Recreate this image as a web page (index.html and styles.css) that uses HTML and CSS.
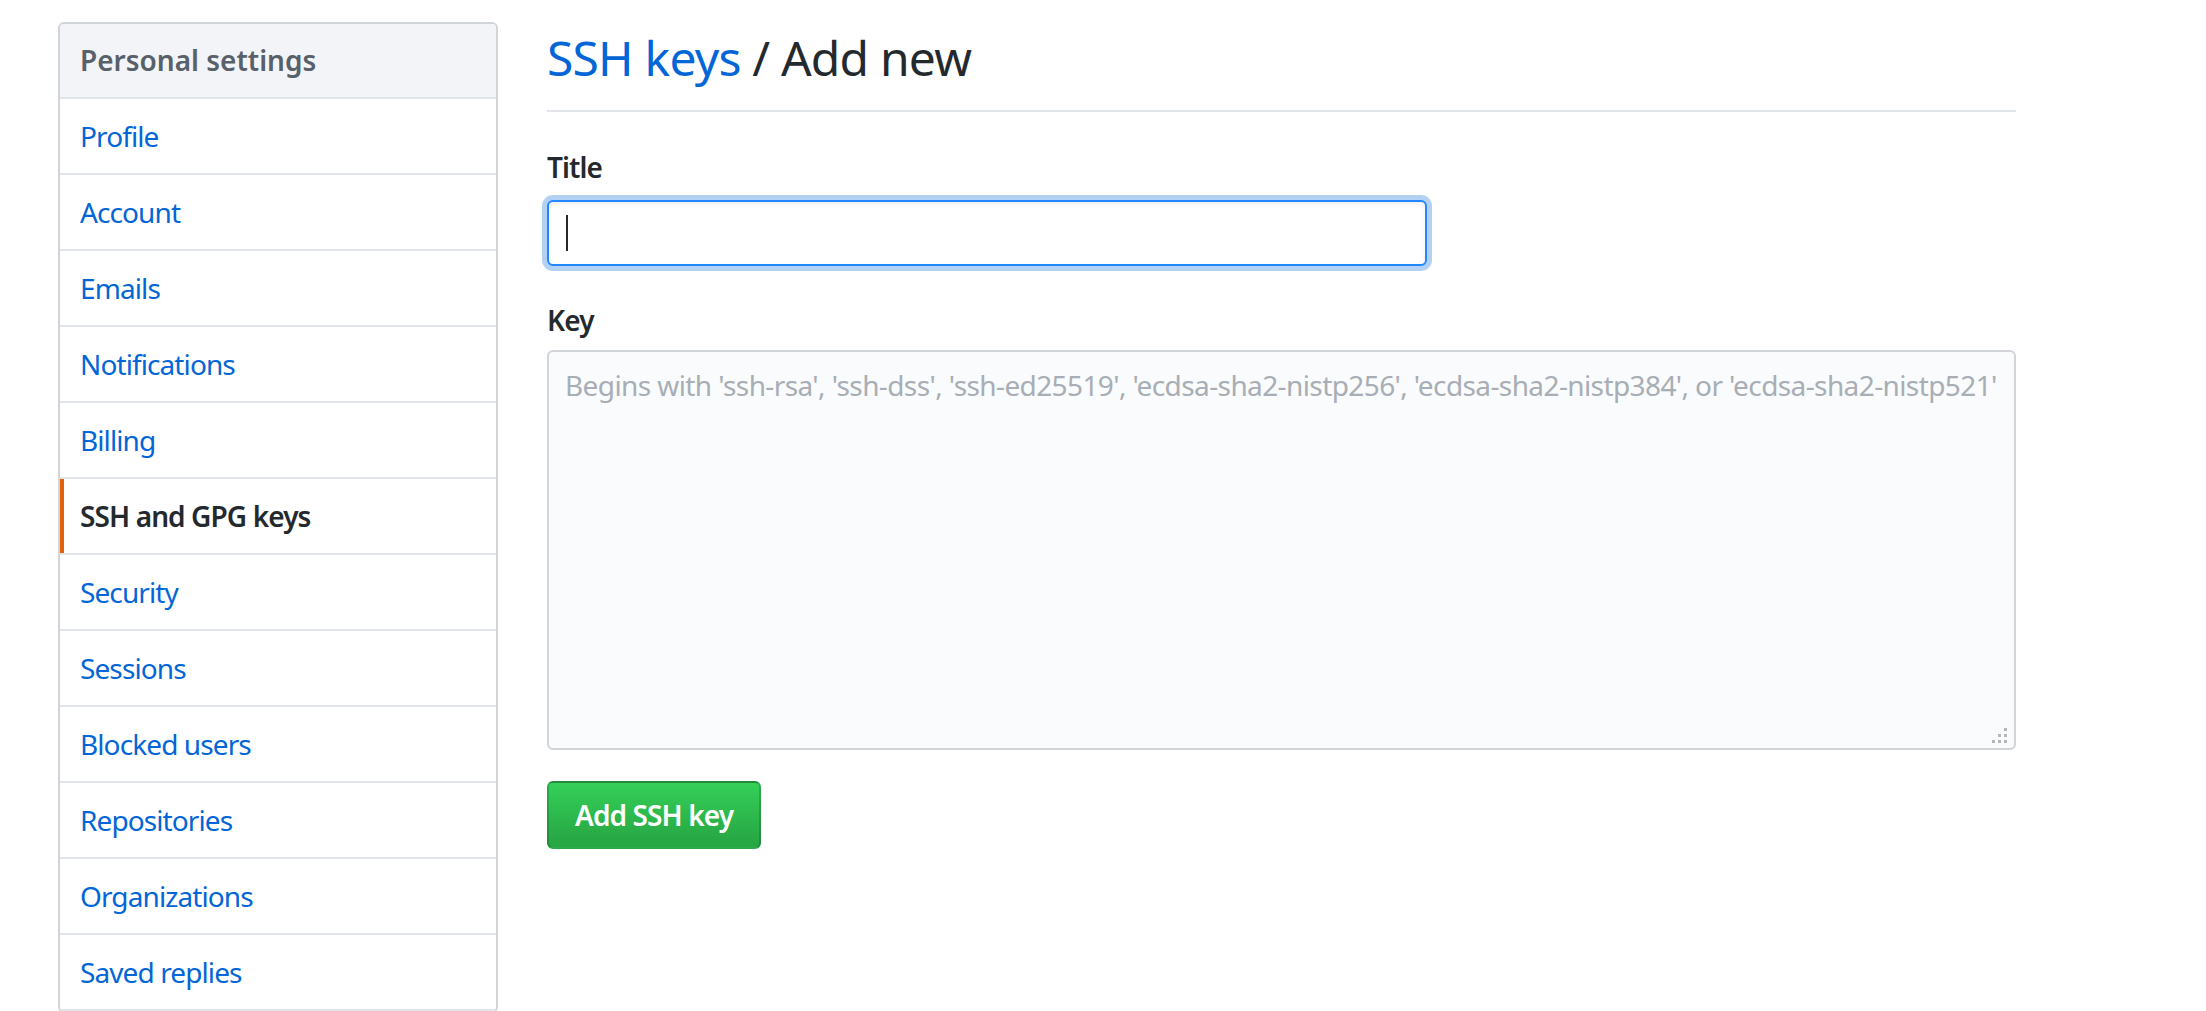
FILE: index.html
```html
<!DOCTYPE html>
<html lang="en">
<head>
<meta charset="utf-8">
<title>SSH keys / Add new</title>
<link rel="stylesheet" href="styles.css">
</head>
<body>
<div class="page">
  <nav class="menu">
    <div class="menu-heading">Personal settings</div>
    <a class="menu-item" href="#">Profile</a>
    <a class="menu-item" href="#">Account</a>
    <a class="menu-item" href="#">Emails</a>
    <a class="menu-item" href="#">Notifications</a>
    <a class="menu-item" href="#">Billing</a>
    <a class="menu-item selected" href="#">SSH and GPG keys</a>
    <a class="menu-item" href="#">Security</a>
    <a class="menu-item" href="#">Sessions</a>
    <a class="menu-item" href="#">Blocked users</a>
    <a class="menu-item" href="#">Repositories</a>
    <a class="menu-item" href="#">Organizations</a>
    <a class="menu-item" href="#">Saved replies</a>
  </nav>
  <main class="main">
    <div class="subhead">
      <h2 class="subhead-heading"><a href="#">SSH keys</a> / Add new</h2>
    </div>
    <form class="key-form">
      <div class="form-group title-group">
        <label class="form-label" for="title">Title</label>
        <div class="input-wrap">
          <input id="title" class="form-control focused" type="text">
          <span class="caret"></span>
        </div>
      </div>
      <div class="form-group key-group">
        <label class="form-label" for="key">Key</label>
        <div class="area-wrap">
          <textarea id="key" class="form-control key-area" placeholder="Begins with 'ssh-rsa', 'ssh-dss', 'ssh-ed25519', 'ecdsa-sha2-nistp256', 'ecdsa-sha2-nistp384', or 'ecdsa-sha2-nistp521'"></textarea>
          <svg class="grip" width="15" height="15" viewBox="0 0 15 15" aria-hidden="true">
            <rect x="12" y="0" width="3" height="3"/>
            <rect x="6" y="6" width="3" height="3"/>
            <rect x="12" y="6" width="3" height="3"/>
            <rect x="0" y="12" width="3" height="3"/>
            <rect x="6" y="12" width="3" height="3"/>
            <rect x="12" y="12" width="3" height="3"/>
          </svg>
        </div>
      </div>
      <button type="button" class="btn-primary">Add SSH key</button>
    </form>
  </main>
</div>
</body>
</html>
```
FILE: styles.css
```css
* {
  box-sizing: border-box;
}

html,
body {
  margin: 0;
  background: #fff;
}

body {
  font-family: "Segoe UI", "Noto Sans", "Open Sans", sans-serif;
  font-size: 28px;
  line-height: 1.5;
  letter-spacing: -0.9px;
  color: #24292e;
}

.page {
  display: flex;
  align-items: flex-start;
  gap: 49px;
  padding: 22px 0 0 58px;
  height: 1011px;
  overflow: hidden;
}

/* ---------- sidebar menu ---------- */
.menu {
  flex: none;
  width: 440px;
  border: 2px solid #d1d5da;
  border-radius: 6px;
  background: #fff;
  overflow: hidden;
}

.menu-heading {
  padding: 16px 20px;
  line-height: 41px;
  font-size: 28px;
  font-weight: 600;
  letter-spacing: 0;
  color: #586069;
  background: #f3f4f8;
  border-bottom: 2px solid #e1e4e8;
}

.menu-item {
  display: block;
  padding: 16px 20px;
  line-height: 42px;
  color: #0366d6;
  text-decoration: none;
  border-bottom: 2px solid #e1e4e8;
}

.menu-item.selected {
  color: #24292e;
  font-weight: 600;
  box-shadow: inset 4px 0 0 #e36209;
}

/* ---------- main column ---------- */
.main {
  flex: none;
  width: 1469px;
}

.subhead {
  padding-bottom: 16px;
  margin-bottom: 34px;
  border-bottom: 2px solid #e1e4e8;
}

.subhead-heading {
  margin: 0;
  font-size: 48px;
  font-weight: 400;
  line-height: 72px;
  letter-spacing: -0.8px;
  color: #24292e;
}

.subhead-heading a {
  color: #0366d6;
  text-decoration: none;
}

.form-label {
  display: block;
  font-weight: 600;
  line-height: 42px;
}

.title-group {
  margin-bottom: 33px;
}

.title-group .form-label {
  margin-bottom: 12px;
}

.key-group {
  margin-bottom: 31px;
}

.key-group .form-label {
  margin-bottom: 9px;
}

.input-wrap {
  position: relative;
  width: 880px;
}

.area-wrap {
  position: relative;
}

.form-control {
  display: block;
  font-family: inherit;
  font-size: 28px;
  letter-spacing: -0.9px;
  color: #24292e;
  border: 2px solid #d1d5da;
  border-radius: 6px;
  background: #fafbfc;
  outline: none;
}

input.form-control {
  width: 880px;
  height: 66px;
  padding: 10px 16px;
}

.form-control.focused {
  background: #fff;
  border-color: #2188ff;
  box-shadow: inset 0 2px 4px rgba(27, 31, 35, 0.075), 0 0 0 5px rgba(3, 102, 214, 0.3);
}

.caret {
  position: absolute;
  left: 19px;
  top: 15px;
  width: 2px;
  height: 36px;
  background: #24292e;
}

.key-area {
  width: 100%;
  height: 400px;
  padding: 12px 16px;
  line-height: 42px;
  letter-spacing: -0.6px;
  resize: none;
}

.key-area::placeholder {
  color: #a8aeb5;
  opacity: 1;
}

.grip {
  position: absolute;
  right: 9px;
  bottom: 7px;
  fill: #b4b7ba;
}

.btn-primary {
  display: block;
  height: 68px;
  padding: 0 26px;
  font-family: inherit;
  font-size: 28px;
  font-weight: 600;
  letter-spacing: -0.9px;
  line-height: 64px;
  color: #fff;
  background: linear-gradient(180deg, #34d058 0%, #28a745 90%);
  border: 2px solid rgba(27, 31, 35, 0.2);
  border-radius: 6px;
  cursor: pointer;
}
```
